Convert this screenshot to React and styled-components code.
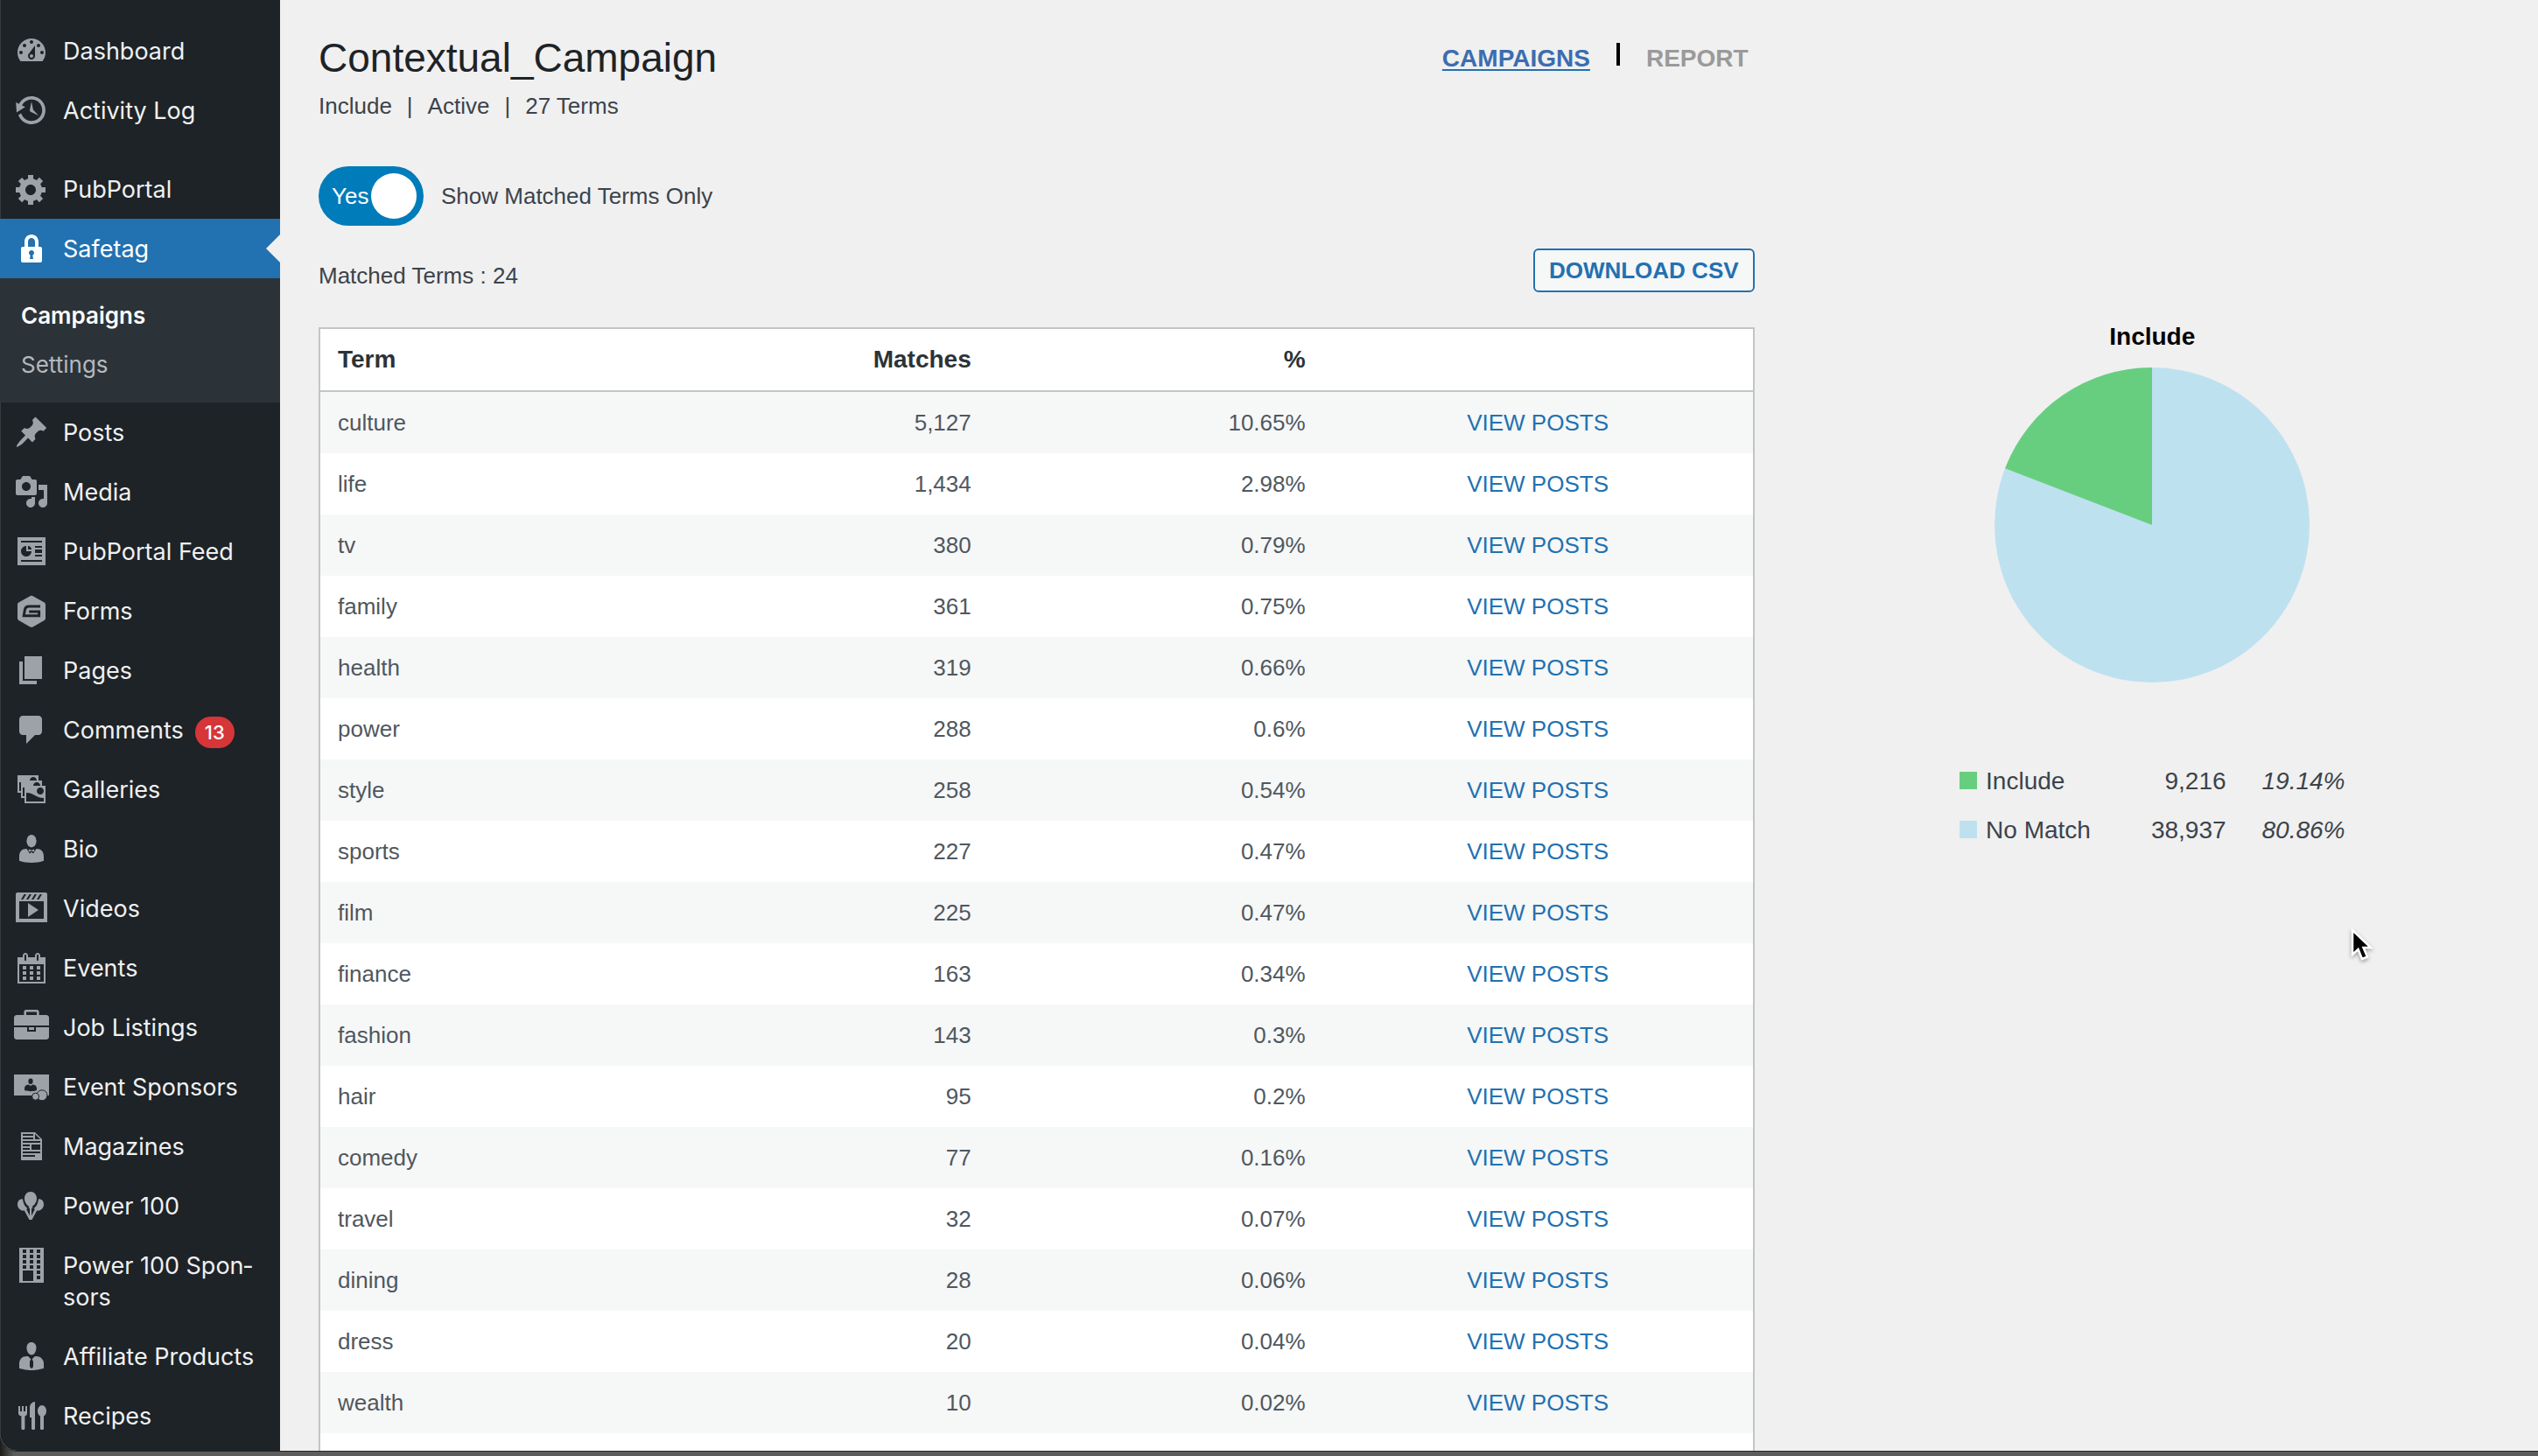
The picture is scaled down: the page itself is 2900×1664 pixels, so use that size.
import React, { useState } from "react";
import styled, { createGlobalStyle, css } from "styled-components";

const uiFont = `Inter, Roboto, "Liberation Sans", sans-serif`;
const bodyFont = `"Liberation Sans", Arial, Helvetica, sans-serif`;

const GlobalStyle = createGlobalStyle`
  *, *::before, *::after { box-sizing: border-box; }
  html, body { margin: 0; padding: 0; }
  body {
    background: #5d5d5b;
    font-family: ${bodyFont};
    font-size: 26px;
    color: #3c434a;
    overflow: hidden;
  }
`;

/* ---------- shell ---------- */

const Desktop = styled.div`
  height: 100vh;
  padding-bottom: 6px;
  background: linear-gradient(90deg, #1b1b1b 0, #5d5d5b 16px);
`;

const Shell = styled.div`
  height: 100%;
  display: grid;
  grid-template-columns: 320px minmax(0, 1fr);
  overflow: hidden;
  background: #f0f0f0;
  border-radius: 0 0 0 20px;
  box-shadow: 0 1px 0 #22282a;
`;

/* ---------- side menu ---------- */

const Sidebar = styled.nav`
  background: #1d2327;
  padding-top: 24px;
  box-shadow: inset 1px 0 0 #363b3f;
  font-family: ${uiFont};
`;

const MenuList = styled.ul`
  list-style: none;
  margin: 0;
  padding: 0;
`;

const MenuItem = styled.li`
  margin-top: ${(p) => (p.$separated ? "22px" : "0")};
`;

const MenuLink = styled.a`
  position: relative;
  display: flex;
  align-items: flex-start;
  gap: 16px;
  padding: 14px 16px;
  color: #f0f0f1;
  text-decoration: none;
  font-size: 27px;
  line-height: 36px;
  ${(p) =>
    p.$current &&
    css`
      background: #2271b1;
      color: #fff;
      &::after {
        content: "";
        position: absolute;
        right: 0;
        top: 18px;
        border: 16px solid transparent;
        border-left: 0;
        border-right-color: #f0f0f0;
      }
    `}
`;

const MenuLabel = styled.span`
  padding: 3px 0 1px;
  flex: 1;
  hyphens: manual;
`;

const Glyph = styled.svg`
  flex: none;
  width: 40px;
  height: 40px;
  display: block;
  color: ${(p) => (p.$current ? "#fff" : "#9ca2a7")};
  fill: currentColor;
`;

const CountBadge = styled.span`
  display: inline-block;
  vertical-align: middle;
  margin: -4px 0 -4px 13px;
  min-width: 45px;
  height: 36px;
  padding: 0 8px;
  border-radius: 18px;
  background: #d63638;
  color: #fff;
  font-size: 22px;
  font-weight: 500;
  line-height: 36px;
  text-align: center;
`;

const SubMenu = styled.ul`
  list-style: none;
  margin: 0;
  padding: 15px 0;
  background: #2c3338;
`;

const SubLink = styled.a`
  display: block;
  padding: 10px 24px;
  line-height: 36px;
  font-size: 26px;
  text-decoration: none;
  color: ${(p) => (p.$current ? "#fff" : "#b4b9be")};
  font-weight: ${(p) => (p.$current ? 600 : 400)};
`;

const ground = "#1d2327";

const icons = {
  dashboard: (
    <path d="M3.76 16h12.48c1.1-1.37 1.76-3.11 1.76-5 0-4.42-3.58-8-8-8s-8 3.58-8 8c0 1.89.66 3.63 1.76 5zM10 4c.55 0 1 .45 1 1s-.45 1-1 1-1-.45-1-1 .45-1 1-1zM6 6c.55 0 1 .45 1 1s-.45 1-1 1-1-.45-1-1 .45-1 1-1zm8 0c.55 0 1 .45 1 1s-.45 1-1 1-1-.45-1-1 .45-1 1-1zm-5.37 5.55L12 7v6c0 1.1-.9 2-2 2s-2-.9-2-2c0-.57.24-1.08.63-1.45zM4 10c.55 0 1 .45 1 1s-.45 1-1 1-1-.45-1-1 .45-1 1-1zm12 0c.55 0 1 .45 1 1s-.45 1-1 1-1-.45-1-1 .45-1 1-1zm-5 3c0-.55-.45-1-1-1s-1 .45-1 1 .45 1 1 1 1-.45 1-1z" fillRule="evenodd" />
  ),
  history: (
    <path d="M13.65 2.88c3.93 2.01 5.48 6.84 3.47 10.77s-6.83 5.48-10.77 3.47c-1.87-.96-3.2-2.56-3.86-4.4l1.64-1.03c.45 1.57 1.52 2.95 3.08 3.76 3.01 1.54 6.69.35 8.23-2.66 1.55-3.01.36-6.69-2.65-8.24C9.78 3.01 6.1 4.2 4.56 7.21l1.88.97-4.95 3.08-.39-5.82 1.78.91C4.9 2.4 9.75.89 13.65 2.88zm-4.36 7.83C9.11 10.53 9 10.28 9 10c0-.07.03-.12.04-.19h-.01L10 5l.97 4.81L14 13l-4.5-2.12.02-.02c-.08-.04-.16-.09-.23-.15z" />
  ),
  gear: (
    <path d="M18 12h-2.18c-.17.7-.44 1.35-.81 1.93l1.54 1.54-2.1 2.1-1.54-1.54c-.58.36-1.23.63-1.91.79V19H8v-2.18c-.68-.16-1.33-.43-1.91-.79l-1.54 1.54-2.12-2.12 1.54-1.54c-.36-.58-.63-1.23-.79-1.91H1V9.03h2.17c.16-.7.44-1.35.8-1.94L2.43 5.55l2.1-2.1 1.54 1.54c.58-.37 1.24-.64 1.93-.81V2h3v2.18c.68.16 1.33.43 1.91.79l1.54-1.54 2.12 2.12-1.54 1.54c.36.59.64 1.24.8 1.94H18V12zm-8.5 1.5c1.66 0 3-1.34 3-3s-1.34-3-3-3-3 1.34-3 3 1.34 3 3 3z" fillRule="evenodd" />
  ),
  lock: (
    <path d="M14 9h1c.55 0 1 .45 1 1v7c0 .55-.45 1-1 1H5c-.55 0-1-.45-1-1v-7c0-.55.45-1 1-1h1V6c0-2.21 1.79-4 4-4s4 1.79 4 4v3zm-2 0V6c0-1.1-.9-2-2-2s-2 .9-2 2v3h4zm-1 7l-.36-2.15c.51-.24.86-.75.86-1.35 0-.83-.67-1.5-1.5-1.5s-1.5.67-1.5 1.5c0 .6.35 1.11.86 1.35L9 16h2z" fillRule="evenodd" />
  ),
  pin: (
    <path d="M10.44 3.02l1.82-1.82 6.36 6.35-1.83 1.82c-1.05-.68-2.48-.57-3.41.36l-.75.75c-.92.93-1.04 2.35-.35 3.41l-1.83 1.82-2.41-2.41-2.8 2.79c-.42.42-3.38 2.71-3.8 2.29s1.86-3.39 2.28-3.81l2.79-2.79L4.1 9.36l1.83-1.82c1.05.69 2.48.57 3.4-.36l.75-.75c.93-.92 1.05-2.35.36-3.41z" />
  ),
  media: (
    <path d="M13 11V4c0-.55-.45-1-1-1h-1.67L9 1H5L3.67 3H2c-.55 0-1 .45-1 1v7c0 .55.45 1 1 1h10c.55 0 1-.45 1-1zM7 4.5c1.38 0 2.5 1.12 2.5 2.5S8.38 9.5 7 9.5 4.5 8.38 4.5 7 5.62 4.5 7 4.5zM14 6h5v10.5c0 1.38-1.12 2.5-2.5 2.5S14 17.88 14 16.5s1.12-2.5 2.5-2.5c.17 0 .34.02.5.05V9h-3V6zm-4 8.05V13h2v3.5c0 1.38-1.12 2.5-2.5 2.5S7 17.88 7 16.5 8.12 14 9.5 14c.17 0 .34.02.5.05z" fillRule="evenodd" />
  ),
  analytics: (
    <path d="M18 18V2H2v16h16zM16 5H4V4h12v1zM7 7v3h3c0 1.66-1.34 3-3 3s-3-1.34-3-3 1.34-3 3-3zm1 2V7c1.1 0 2 .9 2 2H8zm8-1h-4V7h4v1zm0 3h-4V9h4v2zm0 2h-4v-1h4v1zm0 3H4v-1h12v1z" fillRule="evenodd" />
  ),
  forms: (
    <>
      <path d="M9.2 1.6q.8-.4 1.6 0l6.5 3.7q.7.4.7 1.2v7.8q0 .8-.7 1.2l-6.5 3.7q-.8.4-1.6 0l-6.5-3.7Q2 15.1 2 14.3V6.5q0-.8.7-1.2z" />
      <path d="M15 7.5H8.4Q6.6 7.5 6.2 9.4L5.6 12.9h8.7v-2.4H8.6" fill="none" stroke={ground} strokeWidth="1.5" />
    </>
  ),
  pages: <path d="M6 15V2h10v13H6zm-1 1h8v2H3V5h2v11z" />,
  comment: (
    <path d="M5 2h9c1.1 0 2 .9 2 2v7c0 1.1-.9 2-2 2h-2l-5 5v-5H5c-1.1 0-2-.9-2-2V4c0-1.1.9-2 2-2z" />
  ),
  galleries: (
    <path d="M4 15v-3H2V2h12v3h2v3h2v10H6v-3H4zm7-12c-1.1 0-2 .9-2 2h4c0-1.1-.89-2-2-2zm-7 8V6H3v5h1zm7-3h4c0-1.1-.89-2-2-2-1.1 0-2 .9-2 2zm-5 6V9H5v5h1zm9-1c1.1 0 2-.89 2-2 0-1.1-.9-2-2-2s-2 .9-2 2c0 1.11.9 2 2 2zm2 4v-2c-5 0-5-3-10-3v5h10z" fillRule="evenodd" />
  ),
  bio: (
    <>
      <ellipse cx="10" cy="5.6" rx="2.8" ry="3.6" />
      <path d="M3 16.9v-2.5c0-3 1.6-4.4 4.2-4.4L9 12.8l1-.9 1 .9L12.8 10c2.6 0 4.2 1.4 4.2 4.4v2.5C15 17.6 12.5 18 10 18s-5-.4-7-1.1z" />
      <path d="M8.4 10.2l1.6.7 1.6-.7v1.5L10 11.2l-1.6.5z" />
    </>
  ),
  video: (
    <path d="M2 1h16c.55 0 1 .45 1 1v16H1V2c0-.55.45-1 1-1zM4 5h1.2L7 2H5.8zm3 0h1.2L10 2H8.8zm3 0h1.2L13 2h-1.2zm3 0h1.2L16 2h-1.2zM3 6v10h14V6zm5 1l6 4-6 4z" fillRule="evenodd" />
  ),
  calendar: (
    <path d="M15 4h3v15H2V4h3V3c0-.41.15-.76.44-1.06.29-.29.65-.44 1.06-.44s.77.15 1.06.44c.29.3.44.65.44 1.06v1h4V3c0-.41.15-.76.44-1.06.29-.29.65-.44 1.06-.44s.77.15 1.06.44c.29.3.44.65.44 1.06v1zM6 3v2.5c0 .14.05.26.15.36.09.09.21.14.35.14s.26-.05.35-.14c.1-.1.15-.22.15-.36V3c0-.14-.05-.26-.15-.35-.09-.1-.21-.15-.35-.15s-.26.05-.35.15c-.1.09-.15.21-.15.35zm7 0v2.5c0 .14.05.26.14.36.1.09.22.14.36.14s.26-.05.36-.14c.09-.1.14-.22.14-.36V3c0-.14-.05-.26-.14-.35-.1-.1-.22-.15-.36-.15s-.26.05-.36.15c-.09.09-.14.21-.14.35zm4 15V8H3v10h14zM7 9v2H5V9h2zm2 0h2v2H9V9zm4 2V9h2v2h-2zm-6 1v2H5v-2h2zm2 0h2v2H9v-2zm4 2v-2h2v2h-2zm-6 1v2H5v-2h2zm4 2H9v-2h2v2zm4 0h-2v-2h2v2z" fillRule="evenodd" />
  ),
  briefcase: (
    <path d="M5.7 3V1.2C5.7.5 6.2 0 6.9 0h6.2c.7 0 1.2.5 1.2 1.2V3h4.2c.8 0 1.5.7 1.5 1.5V9H0V4.5C0 3.7.7 3 1.5 3zM7 3h6V1.2H7zM0 10h7.5v2.5h5V10H20v5.5c0 .8-.7 1.5-1.5 1.5h-17C.7 17 0 16.3 0 15.5zm8.5 0h3v1.5h-3z" fillRule="evenodd" />
  ),
  sponsors: (
    <>
      <path d="M0 3h20v12H0z" />
      <g fill={ground}>
        <ellipse cx="9.5" cy="6.9" rx="1.3" ry="1.6" />
        <path d="M6 12v-.8c0-1.5.8-2.3 2.3-2.4l1.2.7 1.2-.7c1.5.1 2.3.9 2.3 2.4v.8c-2 .8-5 .8-7 0z" />
      </g>
      <g stroke={ground} strokeWidth=".5">
        <circle cx="16" cy="14.9" r="3" />
        <circle cx="12.3" cy="15.6" r="2" />
      </g>
    </>
  ),
  document: (
    <path d="M12 2l4 4v12H4V2zM5 3v1h6V3zm0 2v1h6V5zm7-2v3h3zM5 7v1h10V7zm0 2v1h4V9zm5 0v3h5V9zm-5 2v1h4v-1zm0 2v1h10v-1zm0 2v1h7v-1z" fillRule="evenodd" />
  ),
  balloons: (
    <path d="M9.5 2C11.6 2 13 3.7 13 5.9c0 2-1.4 3.9-2.7 4.6l.5.9H10v4.3l1.9-3.7-.6-.5.7-.6C13 10 13.7 8.5 14 6.2c1.8-.2 3 1.3 3 3.1 0 2-1.7 3.7-3.5 3.5l-.4-.1-2.4 4.4-.4.9H8.7l-.4-.9-2.4-4.4-.4.1C3.7 13 2 11.3 2 9.3c0-1.8 1.2-3.3 3-3.1.3 2.3 1 3.8 2 4.7l.7.6-.6.5L9 15.7v-4.3h-.8l.5-.9C7.4 9.8 6 7.9 6 5.9 6 3.7 7.4 2 9.5 2z" />
  ),
  building: (
    <path d="M3 0h14v20H3zM5 1v2h2V1zm4 0v2h2V1zm4 0v2h2V1zM5 4v2h2V4zm4 0v2h2V4zm4 0v2h2V4zM5 7v2h2V7zm4 0v2h2V7zm4 0v2h2V7zm-8 3v2h2v-2zm4 0v2h2v-2zm4 0v2h2v-2zm-8 3v6h6v-6zm8 0v2h2v-2zm0 3v2h2v-2z" fillRule="evenodd" />
  ),
  businessman: (
    <path d="M7.3 6l-.03-.19c-.04-.37-.05-.73-.03-1.08.02-.36.1-.71.25-1.04.14-.32.31-.61.52-.86s.49-.46.83-.6c.34-.15.72-.23 1.13-.23.69 0 1.26.2 1.71.59s.76.87.91 1.44.18 1.16.09 1.78l-.03.19c-.01.09-.05.25-.11.48-.05.24-.12.47-.2.69-.08.21-.19.45-.34.72-.14.27-.3.49-.47.69-.18.19-.4.34-.67.48-.27.13-.55.19-.86.19s-.59-.06-.87-.19c-.26-.13-.49-.29-.67-.5-.18-.2-.34-.42-.49-.66-.15-.25-.26-.49-.34-.73-.09-.25-.16-.47-.21-.67-.06-.21-.1-.37-.12-.5zm9.2 6.24c.41.7.5 1.41.5 2.14v2.49c0 .03-.12.08-.29.13-.18.04-.42.13-.97.27-.55.12-1.1.24-1.65.34s-1.19.19-1.95.27c-.75.08-1.46.12-2.13.12-.68 0-1.39-.04-2.14-.12-.75-.07-1.4-.17-1.98-.27-.58-.11-1.08-.23-1.56-.34-.49-.11-.8-.21-1.06-.29L3 16.87v-2.49c0-.75.07-1.46.46-2.15s.81-1.25 1.5-1.68C5.66 10.12 7.19 10 8 10l1.67 1.67L9 13v3l1.02 1.08L11 16v-3l-.68-1.33L11.97 10c.77 0 2.2.07 2.9.52.71.45 1.21 1.02 1.63 1.72z" />
  ),
  food: (
    <>
      <path d="M2.5 4.5h1v3h1v-3h1v3h1v-3h1v4c0 .9-.5 1.5-1.3 1.8v6.9c0 .5-.5.8-1 .8s-1-.3-1-.8v-6.9C3 10 2.5 9.4 2.5 8.5z" />
      <path d="M12 2v15.2c0 .5-.5.8-1 .8s-1-.3-1-.8V11H9V5.5C9 3.5 10.3 2 12 2z" />
      <path d="M16 4c1.4 0 2.5 1.5 2.5 3.3 0 1.4-.6 2.5-1.5 3v6.9c0 .5-.5.8-1 .8s-1-.3-1-.8v-6.9c-.9-.5-1.5-1.6-1.5-3C13.5 5.5 14.6 4 16 4z" />
    </>
  ),
};

const menu = [
  { label: "Dashboard", icon: "dashboard" },
  { label: "Activity Log", icon: "history" },
  { label: "PubPortal", icon: "gear", separated: true },
  {
    label: "Safetag",
    icon: "lock",
    current: true,
    children: [{ label: "Campaigns", current: true }, { label: "Settings" }],
  },
  { label: "Posts", icon: "pin" },
  { label: "Media", icon: "media" },
  { label: "PubPortal Feed", icon: "analytics" },
  { label: "Forms", icon: "forms" },
  { label: "Pages", icon: "pages" },
  { label: "Comments", icon: "comment", count: 13 },
  { label: "Galleries", icon: "galleries" },
  { label: "Bio", icon: "bio" },
  { label: "Videos", icon: "video" },
  { label: "Events", icon: "calendar" },
  { label: "Job Listings", icon: "briefcase" },
  { label: "Event Sponsors", icon: "sponsors" },
  { label: "Magazines", icon: "document" },
  { label: "Power 100", icon: "balloons" },
  { label: "Power 100 Spon\u00adsors", icon: "building" },
  { label: "Affiliate Products", icon: "businessman" },
  { label: "Recipes", icon: "food" },
];

function SideMenu() {
  return (
    <Sidebar aria-label="Main menu">
      <MenuList>
        {menu.map((item) => (
          <MenuItem key={item.label} $separated={item.separated}>
            <MenuLink href="#" $current={item.current}>
              <Glyph viewBox="0 0 20 20" overflow="visible" aria-hidden="true" $current={item.current}>
                {icons[item.icon]}
              </Glyph>
              <MenuLabel>
                {item.label}
                {item.count && <CountBadge>{item.count}</CountBadge>}
              </MenuLabel>
            </MenuLink>
            {item.children && (
              <SubMenu>
                {item.children.map((child) => (
                  <li key={child.label}>
                    <SubLink href="#" $current={child.current}>
                      {child.label}
                    </SubLink>
                  </li>
                ))}
              </SubMenu>
            )}
          </MenuItem>
        ))}
      </MenuList>
    </Sidebar>
  );
}

/* ---------- content ---------- */

const Content = styled.main`
  display: grid;
  grid-template-columns: minmax(0, 65fr) minmax(0, 35fr);
  gap: 12px;
  align-items: start;
  padding-left: 44px;
`;

const Report = styled.div`
  padding-top: 40px;
`;

const TitleBar = styled.header`
  display: flex;
  justify-content: space-between;
  align-items: flex-start;
`;

const Title = styled.h1`
  margin: 0;
  font-size: 46px;
  line-height: 52px;
  font-weight: 400;
  color: #1d2327;
`;

const Meta = styled.p`
  display: flex;
  gap: 17px;
  margin: 14px 0 0;
  line-height: 30px;
`;

const Tabs = styled.nav`
  display: flex;
  align-items: center;
  padding: 9px 7px 0 0;
  font-size: 28px;
  font-weight: 700;
  line-height: 36px;
`;

const Tab = styled.a`
  color: ${(p) => (p.$current ? "#3b6db0" : "#9a9a9a")};
  text-decoration: none;
  ${(p) =>
    p.$current &&
    css`
      text-decoration: underline #2271b1 2px;
      text-underline-offset: 3px;
      text-decoration-skip-ink: none;
    `}
`;

const TabDivider = styled.span`
  width: 4px;
  height: 26px;
  margin: 0 30px 10px;
  background: #000;
`;

const SwitchRow = styled.label`
  display: flex;
  align-items: center;
  gap: 20px;
  width: fit-content;
  margin-top: 54px;
`;

const SwitchInput = styled.input`
  appearance: none;
  display: flex;
  align-items: center;
  justify-content: space-between;
  width: 120px;
  height: 68px;
  margin: 0;
  padding: 0 8px 0 15px;
  border-radius: 34px;
  background: #8c8f94;
  color: #fff;
  font: 26px ${bodyFont};
  cursor: pointer;
  &::before {
    content: "No";
  }
  &:checked {
    background: #007cba;
  }
  &:checked::before {
    content: "Yes";
  }
  &::after {
    content: "";
    flex: none;
    width: 52px;
    height: 52px;
    border-radius: 50%;
    background: #fff;
  }
`;

const TableBar = styled.div`
  display: flex;
  justify-content: space-between;
  align-items: flex-end;
  margin-top: 26px;
`;

const MatchedCount = styled.p`
  margin: 0;
  line-height: 38px;
`;

const DownloadButton = styled.button`
  height: 50px;
  padding: 0 16px;
  border: 2px solid #2271b1;
  border-radius: 6px;
  background: #f6f7f7;
  color: #2271b1;
  font: 700 26px ${bodyFont};
  line-height: 44px;
`;

const TermTable = styled.table`
  width: 100%;
  margin-top: 40px;
  table-layout: fixed;
  border-collapse: separate;
  border-spacing: 0;
  border: 2px solid #c3c4c7;
  background: #fff;
`;

const Th = styled.th`
  width: ${(p) => p.$width || "auto"};
  height: 72px;
  padding: 0 20px;
  border-bottom: 2px solid #c3c4c7;
  font-size: 28px;
  font-weight: 700;
  color: #2c3338;
  text-align: ${(p) => p.$align || "left"};
`;

const Row = styled.tr`
  &:nth-child(odd) {
    background: #f6f7f7;
  }
`;

const Td = styled.td`
  height: 70px;
  padding: 0 20px;
  color: #50575e;
  text-align: ${(p) => p.$align || "left"};
`;

const ViewLink = styled.a`
  color: #2271b1;
  text-decoration: none;
`;

const terms = [
  ["culture", "5,127", "10.65%"],
  ["life", "1,434", "2.98%"],
  ["tv", "380", "0.79%"],
  ["family", "361", "0.75%"],
  ["health", "319", "0.66%"],
  ["power", "288", "0.6%"],
  ["style", "258", "0.54%"],
  ["sports", "227", "0.47%"],
  ["film", "225", "0.47%"],
  ["finance", "163", "0.34%"],
  ["fashion", "143", "0.3%"],
  ["hair", "95", "0.2%"],
  ["comedy", "77", "0.16%"],
  ["travel", "32", "0.07%"],
  ["dining", "28", "0.06%"],
  ["dress", "20", "0.04%"],
  ["wealth", "10", "0.02%"],
];

const Summary = styled.section`
  display: flex;
  flex-direction: column;
  align-items: center;
  padding: 367px 0 0 2px;
  font-size: 28px;
`;

const ChartTitle = styled.h2`
  margin: 0 0 17px;
  font-size: 28px;
  line-height: 36px;
  color: #000;
`;

const Pie = styled.svg`
  display: block;
  width: 360px;
  height: 360px;
`;

const Legend = styled.table`
  margin-top: 85px;
  border-collapse: collapse;
  font-size: 28px;
`;

const LegendCell = styled.td`
  height: 56px;
  padding: 0 0 0 ${(p) => p.$indent || "0"};
  text-align: right;
  font-style: ${(p) => (p.$italic ? "italic" : "normal")};
`;

const LegendName = styled.th`
  height: 56px;
  padding: 0;
  font-weight: 400;
  text-align: left;
`;

const Swatch = styled.span`
  display: inline-block;
  width: 20px;
  height: 20px;
  margin-right: 10px;
  background: ${(p) => p.$color};
`;

const slices = [
  { name: "Include", count: "9,216", share: 19.14, color: "#68ce7f" },
  { name: "No Match", count: "38,937", share: 80.86, color: "#bee1f0" },
];

const Pointer = styled.svg`
  position: absolute;
  left: 2684px;
  top: 1059px;
  width: 32px;
  height: 44px;
  filter: drop-shadow(0 2px 2px rgba(0, 0, 0, 0.35));
  pointer-events: none;
`;

function PieChart() {
  const angle = (slices[0].share / 100) * 2 * Math.PI;
  const x = 180 - 180 * Math.sin(angle);
  const y = 180 - 180 * Math.cos(angle);
  return (
    <Pie viewBox="0 0 360 360" role="img" aria-label="Include share">
      <circle cx="180" cy="180" r="180" fill={slices[1].color} />
      <path d={`M180 180V0A180 180 0 0 0 ${x} ${y}Z`} fill={slices[0].color} />
    </Pie>
  );
}

export default function App() {
  const [matchedOnly, setMatchedOnly] = useState(true);
  return (
    <>
      <GlobalStyle />
      <Desktop>
        <Shell>
          <SideMenu />
          <Content>
            <Report>
              <TitleBar>
                <Title>Contextual_Campaign</Title>
                <Tabs aria-label="Views">
                  <Tab href="#" $current>CAMPAIGNS</Tab>
                  <TabDivider />
                  <Tab href="#">REPORT</Tab>
                </Tabs>
              </TitleBar>
              <Meta>
                <span>Include</span>
                <span>|</span>
                <span>Active</span>
                <span>|</span>
                <span>27 Terms</span>
              </Meta>
              <SwitchRow>
                <SwitchInput
                  type="checkbox"
                  checked={matchedOnly}
                  onChange={(e) => setMatchedOnly(e.target.checked)}
                />
                Show Matched Terms Only
              </SwitchRow>
              <TableBar>
                <MatchedCount>Matched Terms : 24</MatchedCount>
                <DownloadButton type="button">DOWNLOAD CSV</DownloadButton>
              </TableBar>
              <TermTable>
                <thead>
                  <tr>
                    <Th>Term</Th>
                    <Th $align="right">Matches</Th>
                    <Th $align="right">%</Th>
                    <Th $width="30%" aria-label="Posts" />
                  </tr>
                </thead>
                <tbody>
                  {terms.map(([term, matches, share]) => (
                    <Row key={term}>
                      <Td>{term}</Td>
                      <Td $align="right">{matches}</Td>
                      <Td $align="right">{share}</Td>
                      <Td $align="center">
                        <ViewLink href="#">VIEW POSTS</ViewLink>
                      </Td>
                    </Row>
                  ))}
                  <Row>
                    <Td colSpan={4} />
                  </Row>
                </tbody>
              </TermTable>
            </Report>
            <Summary>
              <ChartTitle>Include</ChartTitle>
              <PieChart />
              <Legend>
                <tbody>
                  {slices.map((slice) => (
                    <tr key={slice.name}>
                      <LegendName scope="row">
                        <Swatch $color={slice.color} />
                        {slice.name}
                      </LegendName>
                      <LegendCell $indent="69px">{slice.count}</LegendCell>
                      <LegendCell $indent="41px" $italic>{`${slice.share}%`}</LegendCell>
                    </tr>
                  ))}
                </tbody>
              </Legend>
            </Summary>
          </Content>
        </Shell>
      </Desktop>
      <Pointer viewBox="0 0 32 44" aria-hidden="true">
        <path d="M4 4v28l6.5-6 4.5 11 6-2.5L16.5 24H25z" fill="#000" stroke="#fff" strokeWidth="2.5" />
      </Pointer>
    </>
  );
}
